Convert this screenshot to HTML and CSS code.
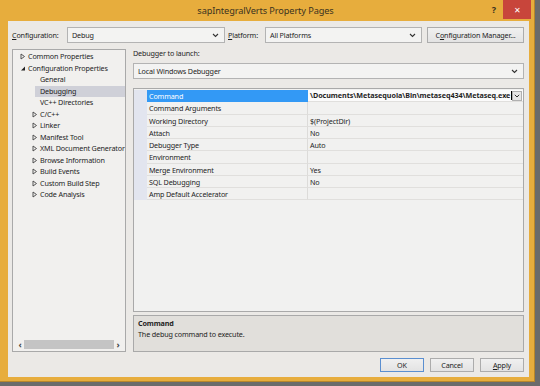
FILE: index.html
```html
<!DOCTYPE html>
<html lang="en">
  <head>
    <meta charset="UTF-8" />
    <title>sapIntegralVerts Property Pages</title>
    <link rel="stylesheet" href="styles.css">
  </head>
  <body>
    <div class="window">
      <div class="titlebar">
        <span class="title">sapIntegralVerts Property Pages</span>
        <span class="help">?</span>
        <span class="close">&#x2715;</span>
      </div>

      <div class="client">
        <div class="config-row">
          <span class="lbl lbl-config"><u>C</u>onfiguration:</span>
          <div class="combo combo-config">
            <span>Debug</span>
            <svg class="chev" width="7" height="5" viewBox="0 0 7 5"><polyline points="1,1 3.5,3.5 6,1" fill="none" stroke="#333" stroke-width="1.1"/></svg>
          </div>
          <span class="lbl lbl-platform"><u>P</u>latform:</span>
          <div class="combo combo-platform">
            <span>All Platforms</span>
            <svg class="chev" width="7" height="5" viewBox="0 0 7 5"><polyline points="1,1 3.5,3.5 6,1" fill="none" stroke="#333" stroke-width="1.1"/></svg>
          </div>
          <button class="btn btn-manager">C<u>o</u>nfiguration Manager...</button>
        </div>

        <div class="main">
          <div class="tree">
            <ul class="tree-list">
              <li class="node lvl0"><svg class="tri" width="6" height="7" viewBox="0 0 6 7"><polygon points="1,1 4.5,3.5 1,6" fill="none" stroke="#444" stroke-width="0.9"/></svg>Common Properties</li>
              <li class="node lvl0"><svg class="tri" width="6" height="7" viewBox="0 0 6 7"><polygon points="5,1.5 5,5.5 1,5.5" fill="#222"/></svg>Configuration Properties</li>
              <li class="node lvl1">General</li>
              <li class="node lvl1 selected">Debugging</li>
              <li class="node lvl1">VC++ Directories</li>
              <li class="node lvl1 has-kids"><svg class="tri" width="6" height="7" viewBox="0 0 6 7"><polygon points="1,1 4.5,3.5 1,6" fill="none" stroke="#444" stroke-width="0.9"/></svg>C/C++</li>
              <li class="node lvl1 has-kids"><svg class="tri" width="6" height="7" viewBox="0 0 6 7"><polygon points="1,1 4.5,3.5 1,6" fill="none" stroke="#444" stroke-width="0.9"/></svg>Linker</li>
              <li class="node lvl1 has-kids"><svg class="tri" width="6" height="7" viewBox="0 0 6 7"><polygon points="1,1 4.5,3.5 1,6" fill="none" stroke="#444" stroke-width="0.9"/></svg>Manifest Tool</li>
              <li class="node lvl1 has-kids"><svg class="tri" width="6" height="7" viewBox="0 0 6 7"><polygon points="1,1 4.5,3.5 1,6" fill="none" stroke="#444" stroke-width="0.9"/></svg>XML Document Generator</li>
              <li class="node lvl1 has-kids"><svg class="tri" width="6" height="7" viewBox="0 0 6 7"><polygon points="1,1 4.5,3.5 1,6" fill="none" stroke="#444" stroke-width="0.9"/></svg>Browse Information</li>
              <li class="node lvl1 has-kids"><svg class="tri" width="6" height="7" viewBox="0 0 6 7"><polygon points="1,1 4.5,3.5 1,6" fill="none" stroke="#444" stroke-width="0.9"/></svg>Build Events</li>
              <li class="node lvl1 has-kids"><svg class="tri" width="6" height="7" viewBox="0 0 6 7"><polygon points="1,1 4.5,3.5 1,6" fill="none" stroke="#444" stroke-width="0.9"/></svg>Custom Build Step</li>
              <li class="node lvl1 has-kids"><svg class="tri" width="6" height="7" viewBox="0 0 6 7"><polygon points="1,1 4.5,3.5 1,6" fill="none" stroke="#444" stroke-width="0.9"/></svg>Code Analysis</li>
            </ul>
            <div class="hscroll">
              <span class="arrow">&lsaquo;</span>
              <div class="thumb"></div>
              <span class="arrow">&rsaquo;</span>
            </div>
          </div>

          <div class="panel">
            <div class="launch-label">Debugger to launch:</div>
            <div class="combo combo-launch">
              <span>Local Windows Debugger</span>
              <svg class="chev" width="7" height="5" viewBox="0 0 7 5"><polyline points="1,1 3.5,3.5 6,1" fill="none" stroke="#333" stroke-width="1.1"/></svg>
            </div>

            <div class="grid">
              <div class="row current">
                <div class="gutter"></div>
                <div class="name">Command</div>
                <div class="value">
                  <span class="edit">\Documents\Metasequoia\Bin\metaseq434\Metaseq.exe</span>
                  <span class="drop"><svg width="6" height="4" viewBox="0 0 6 4"><polyline points="0.8,0.8 3,3 5.2,0.8" fill="none" stroke="#333" stroke-width="1"/></svg></span>
                </div>
              </div>
              <div class="row"><div class="gutter"></div><div class="name">Command Arguments</div><div class="value"></div></div>
              <div class="row"><div class="gutter"></div><div class="name">Working Directory</div><div class="value">$(ProjectDir)</div></div>
              <div class="row"><div class="gutter"></div><div class="name">Attach</div><div class="value">No</div></div>
              <div class="row"><div class="gutter"></div><div class="name">Debugger Type</div><div class="value">Auto</div></div>
              <div class="row"><div class="gutter"></div><div class="name">Environment</div><div class="value"></div></div>
              <div class="row"><div class="gutter"></div><div class="name">Merge Environment</div><div class="value">Yes</div></div>
              <div class="row"><div class="gutter"></div><div class="name">SQL Debugging</div><div class="value">No</div></div>
              <div class="row"><div class="gutter"></div><div class="name">Amp Default Accelerator</div><div class="value"></div></div>
            </div>

            <div class="desc">
              <div class="desc-title">Command</div>
              <div class="desc-text">The debug command to execute.</div>
            </div>
          </div>
        </div>

        <div class="buttons">
          <button class="btn btn-ok">OK</button>
          <button class="btn">Cancel</button>
          <button class="btn"><u>A</u>pply</button>
        </div>
      </div>
    </div>
  </body>
</html>
```

FILE: styles.css
```css
body {
  margin: 0;
  width: 540px;
  height: 386px;
  background: #6b6b6b;
  font-family: "Noto Sans", "Open Sans", sans-serif;
  font-size: 7.2px;
  letter-spacing: -0.15px;
  color: #1e1e1e;
  overflow: hidden;
}

.window {
  box-sizing: border-box;
  width: 535px;
  height: 382px;
  background: #e7ad3d;
  padding: 0 5px 4px 8px;
  display: flex;
  flex-direction: column;
  border-right: 1px solid #b8862a;
  border-bottom: 1px solid #b8862a;
}

/* title bar */
.titlebar {
  position: relative;
  height: 21px;
  flex-shrink: 0;
}
.title {
  position: absolute;
  left: 0;
  right: 0;
  top: 4px;
  text-align: center;
  font-size: 9.2px;
  letter-spacing: -0.1px;
  color: #3a3220;
  margin-left: -6px;
}
.help {
  position: absolute;
  right: 33px;
  top: 3px;
  font-size: 9px;
  font-weight: bold;
  color: #3a3220;
}
.close {
  position: absolute;
  right: -2px;
  top: 0;
  width: 28px;
  height: 19px;
  background: #c8453b;
  color: #fff;
  font-size: 8px;
  line-height: 19px;
  text-align: center;
}

/* client area */
.client {
  flex: 1;
  background: #ebe9e6;
  padding: 6px 5px 0 4px;
  display: flex;
  flex-direction: column;
}

.config-row {
  display: flex;
  align-items: center;
  height: 16px;
}
.lbl {
  flex-shrink: 0;
}
.lbl-config {
  width: 55px;
}
.lbl-platform {
  width: 37px;
  margin-left: 3px;
}
.combo {
  box-sizing: border-box;
  height: 16px;
  border: 1px solid #b3b3b3;
  background: #f3f3f2;
  display: flex;
  align-items: center;
  justify-content: space-between;
  padding: 0 5px 0 4px;
}
.combo-config {
  width: 158px;
}
.combo-platform {
  width: 157px;
}
.btn {
  box-sizing: border-box;
  height: 16px;
  border: 1px solid #acacac;
  background: linear-gradient(#f0f0f0, #e3e3e3);
  font-family: inherit;
  font-size: 7.2px;
  letter-spacing: -0.15px;
  color: #1e1e1e;
  padding: 0;
}
.btn-manager {
  width: 97px;
  margin-left: 5px;
}

/* main area */
.main {
  display: flex;
  margin-top: 6px;
  height: 303px;
}

.tree {
  box-sizing: border-box;
  width: 115px;
  border: 1px solid #a9a9a9;
  background: #f1f0ee;
  display: flex;
  flex-direction: column;
  overflow: hidden;
}
.tree-list {
  list-style: none;
  margin: 0;
  padding: 1px 0 0;
  flex: 1;
}
.node {
  height: 11.5px;
  line-height: 11.5px;
  white-space: nowrap;
  display: flex;
  align-items: center;
}
.tri {
  flex-shrink: 0;
  margin-right: 2px;
}
.lvl0 {
  padding-left: 7px;
}
.lvl1 {
  padding-left: 27px;
}
.lvl1.has-kids {
  padding-left: 19px;
}
.selected {
  background: #cfd0d8;
  margin-left: 22px;
  padding-left: 5px;
}

.hscroll {
  height: 11px;
  display: flex;
  align-items: center;
  padding: 0 3px;
  margin-bottom: 1px;
}
.arrow {
  width: 8px;
  text-align: center;
  font-size: 9px;
  font-weight: bold;
  color: #444;
}
.thumb {
  flex: 1;
  height: 9px;
  background: #c4c4c4;
}

.panel {
  width: 391px;
  margin-left: 7px;
  display: flex;
  flex-direction: column;
}
.launch-label {
  height: 10px;
  line-height: 10px;
  margin-top: -1px;
}
.combo-launch {
  margin-top: 5px;
  width: 100%;
}

.grid {
  box-sizing: border-box;
  margin-top: 9px;
  height: 224px;
  border: 1px solid #a9a9a9;
  background: #f1f1f0;
  padding-top: 1px;
}
.row {
  display: flex;
  height: 12.25px;
  line-height: 12px;
}
.gutter {
  width: 13px;
  background: #e2e5ef;
  flex-shrink: 0;
}
.name {
  width: 161px;
  padding-left: 2px;
  box-sizing: border-box;
  border-bottom: 1px solid #e0dfdd;
  border-right: 1px solid #dcdbd9;
  white-space: nowrap;
}
.value {
  flex: 1;
  padding-left: 2px;
  border-bottom: 1px solid #e0dfdd;
  white-space: nowrap;
  overflow: hidden;
}
.current .name {
  background: #3399f5;
  color: #fff;
  border-color: #3399f5;
}
.current .value {
  display: flex;
  align-items: center;
  background: #fbfbfb;
  padding-right: 1px;
}
.edit {
  font-weight: bold;
  letter-spacing: -0.05px;
  border-right: 1px solid #000;
  padding-right: 1px;
  line-height: 9px;
}
.drop {
  box-sizing: border-box;
  width: 10px;
  height: 10px;
  margin-left: auto;
  border: 1px solid #b0b0b0;
  background: #e6e6e6;
  display: flex;
  align-items: center;
  justify-content: center;
}

.desc {
  box-sizing: border-box;
  margin-top: 3px;
  height: 37px;
  border: 1px solid #a9a9a9;
  background: #e1dfdb;
  padding: 2px 4px;
  line-height: 11px;
}
.desc-title {
  font-weight: bold;
}

.buttons {
  display: flex;
  justify-content: flex-end;
  gap: 6px;
  margin-top: 6px;
}
.buttons .btn {
  width: 44px;
  height: 14px;
}
.btn-ok {
  border-color: #5b8fd0;
}
```
